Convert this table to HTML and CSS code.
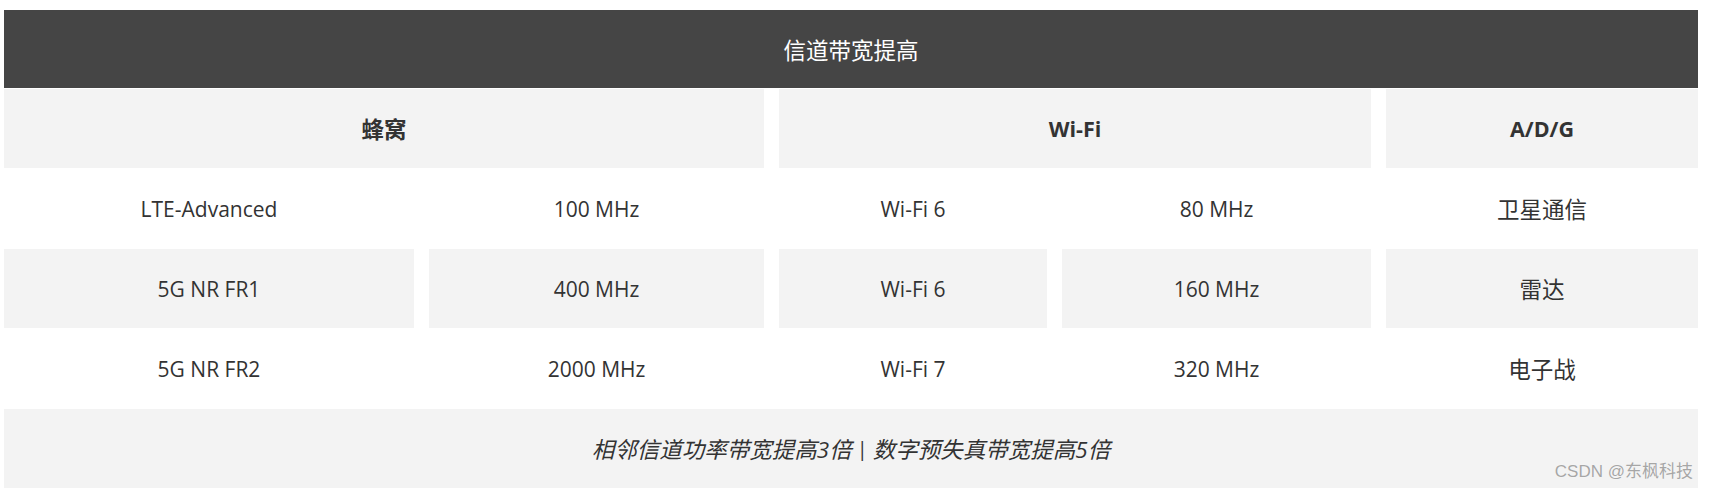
FILE: index.html
```html
<!DOCTYPE html>
<html lang="zh-CN">
<head>
<meta charset="utf-8">
<title>信道带宽提高</title>
<link rel="stylesheet" href="styles.css">
</head>
<body>
<div class="wrap">
  <div class="grid">
    <div class="title">信道带宽提高</div>
    <div class="cell head zh span2">蜂窝</div>
    <div class="cell head span2">Wi-Fi</div>
    <div class="cell head">A/D/G</div>

    <div class="cell">LTE-Advanced</div>
    <div class="cell">100 MHz</div>
    <div class="cell">Wi-Fi 6</div>
    <div class="cell">80 MHz</div>
    <div class="cell zh">卫星通信</div>

    <div class="cell shade">5G NR FR1</div>
    <div class="cell shade">400 MHz</div>
    <div class="cell shade">Wi-Fi 6</div>
    <div class="cell shade">160 MHz</div>
    <div class="cell shade zh">雷达</div>

    <div class="cell">5G NR FR2</div>
    <div class="cell">2000 MHz</div>
    <div class="cell">Wi-Fi 7</div>
    <div class="cell">320 MHz</div>
    <div class="cell zh">电子战</div>

    <div class="cell foot">相邻信道功率带宽提高3倍<span class="sep">|</span>数字预失真带宽提高5倍</div>
  </div>
  <div class="watermark">CSDN @东枫科技</div>
</div>
</body>
</html>
```

FILE: styles.css
```css
html, body {
  margin: 0;
  background: #ffffff;
}

body {
  padding: 10px 0 0 4px;
  font-family: "Open Sans", "Noto Sans CJK SC", sans-serif;
  color: #333333;
}

.wrap {
  position: relative;
  width: 1694px;
}

.grid {
  display: grid;
  grid-template-columns: 410px 335px 268px 309px 312px;
  grid-template-rows: 78px;
  grid-auto-rows: 79px;
  column-gap: 15px;
  row-gap: 1px;
}

.title {
  grid-column: 1 / -1;
  background: #454545;
  color: #ffffff;
  font-size: 22.5px;
  display: flex;
  align-items: center;
  justify-content: center;
}

.cell {
  display: flex;
  align-items: center;
  justify-content: center;
  font-size: 21px;
  background: #ffffff;
}

.zh {
  font-size: 22.5px;
}

.head {
  background: #f3f3f3;
  font-weight: 700;
  font-size: 21.5px;
}

.head.zh {
  font-size: 22.5px;
}

.span2 {
  grid-column: span 2;
}

.shade {
  background: #f3f3f3;
}

.foot {
  grid-column: 1 / -1;
  background: #f3f3f3;
  font-style: italic;
  font-size: 22.5px;
}

.sep {
  font-style: normal;
  font-size: 20px;
  margin: 0 5px;
}

.watermark {
  position: absolute;
  right: 5px;
  bottom: 6px;
  font-family: "Liberation Sans", "Noto Sans CJK SC", sans-serif;
  font-size: 17px;
  color: #a6a6a6;
  text-shadow: 0 0 1px #ffffff;
}
```
